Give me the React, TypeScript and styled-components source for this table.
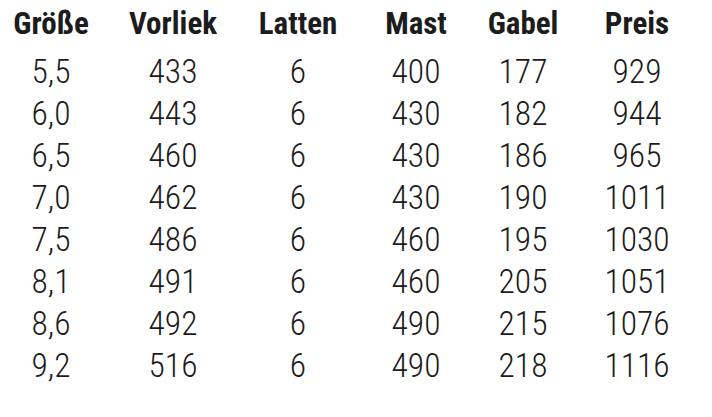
import React from "react";
import styled, { createGlobalStyle } from "styled-components";

const Global = createGlobalStyle`
  html, body { margin: 0; padding: 0; background: #ffffff; }
  body { font-family: "Roboto Condensed", "DejaVu Sans Condensed", sans-serif; color: #1c1c1c; }
`;

const Table = styled.div`
  display: grid;
  grid-template-columns: 102px 142px 108px 128px 86px 142px;
  grid-template-rows: 48px repeat(8, 42px);
  padding-top: 3px;
  width: 712px;
  height: 417px;
  box-sizing: border-box;
`;

const Head = styled.div`
  font-size: 31px;
  font-weight: 700;
  line-height: 42px;
  height: 42px;
  text-align: center;
  white-space: nowrap;
`;

const Cell = styled.div`
  font-size: 33.5px;
  font-weight: 300;
  line-height: 42px;
  text-align: center;
  white-space: nowrap;
`;

const headers = ["Größe", "Vorliek", "Latten", "Mast", "Gabel", "Preis"];
const rows = [
  ["5,5", "433", "6", "400", "177", "929"],
  ["6,0", "443", "6", "430", "182", "944"],
  ["6,5", "460", "6", "430", "186", "965"],
  ["7,0", "462", "6", "430", "190", "1011"],
  ["7,5", "486", "6", "460", "195", "1030"],
  ["8,1", "491", "6", "460", "205", "1051"],
  ["8,6", "492", "6", "490", "215", "1076"],
  ["9,2", "516", "6", "490", "218", "1116"],
];

export default function App() {
  return (
    <>
      <Global />
      <Table>
        {headers.map((h) => (
          <Head key={h}>{h}</Head>
        ))}
        {rows.map((r, i) =>
          r.map((c, j) => <Cell key={`${i}-${j}`}>{c}</Cell>)
        )}
      </Table>
    </>
  );
}
